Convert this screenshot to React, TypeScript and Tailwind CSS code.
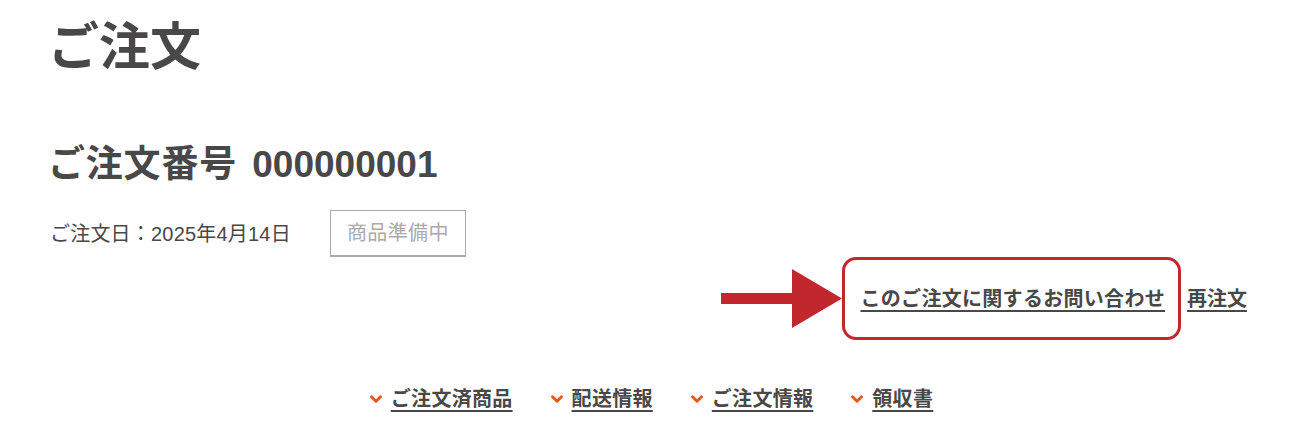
import { ChevronDown } from "lucide-react";

const font = { fontFamily: '"Liberation Sans", "Noto Sans CJK JP", sans-serif' };

const navItems = ["ご注文済商品", "配送情報", "ご注文情報", "領収書"];

function Arrow() {
    return (
        <svg width="121" height="60" viewBox="0 0 121 60" className="shrink-0">
            <rect x="0" y="24" width="73" height="11" fill="#c1272d" />
            <polygon points="71,0 121,29.5 71,59" fill="#c1272d" />
        </svg>
    );
}

export default function App() {
    return (
        <div className="w-[1300px] h-[441px] bg-white text-[#494747] overflow-hidden" style={font}>
            <div className="px-12">
                <h1 className="pt-[24px] text-[51px] leading-[48px] font-bold">ご注文</h1>

                <h2 className="mt-[75px] text-[37px] leading-[36px] font-bold">
                    <span className="tracking-[0.8px]">ご注文番号</span>{" "}
                    <span className="ml-[5px]">000000001</span>
                </h2>

                <div className="mt-[27px] flex items-center">
                    <span className="ml-[2px] text-[20px] leading-7 tracking-[0.2px]">ご注文日：2025年4月14日</span>
                    <span className="ml-[39px] h-[47px] flex items-center px-4 border border-b-2 border-[#aaaaaa] text-[20px] tracking-[0.4px] text-[#aaaaaa]">
                        商品準備中
                    </span>
                </div>

                <div className="flex items-center justify-end">
                    <Arrow />
                    <div className="h-[83px] flex items-center pl-[16px] pr-[13px] border-[3px] border-[#c1272d] rounded-[14px]">
                        <a href="#" className="text-[20px] leading-7 font-bold tracking-[0.3px] underline decoration-2 underline-offset-4">
                            このご注文に関するお問い合わせ
                        </a>
                    </div>
                    <a href="#" className="ml-[6px] mr-[5px] text-[20px] leading-7 font-bold underline decoration-2 underline-offset-4">
                        再注文
                    </a>
                </div>
            </div>

            <nav className="mt-[45px] flex justify-center items-center gap-[35px]">
                {navItems.map((item) => (
                    <a key={item} href="#" className="flex items-center gap-[6px]">
                        <ChevronDown size={18} strokeWidth={4} className="text-[#e8561a]" />
                        <span className="text-[20px] leading-7 font-bold tracking-[0.3px] underline decoration-2 underline-offset-4">
                            {item}
                        </span>
                    </a>
                ))}
            </nav>
        </div>
    );
}
